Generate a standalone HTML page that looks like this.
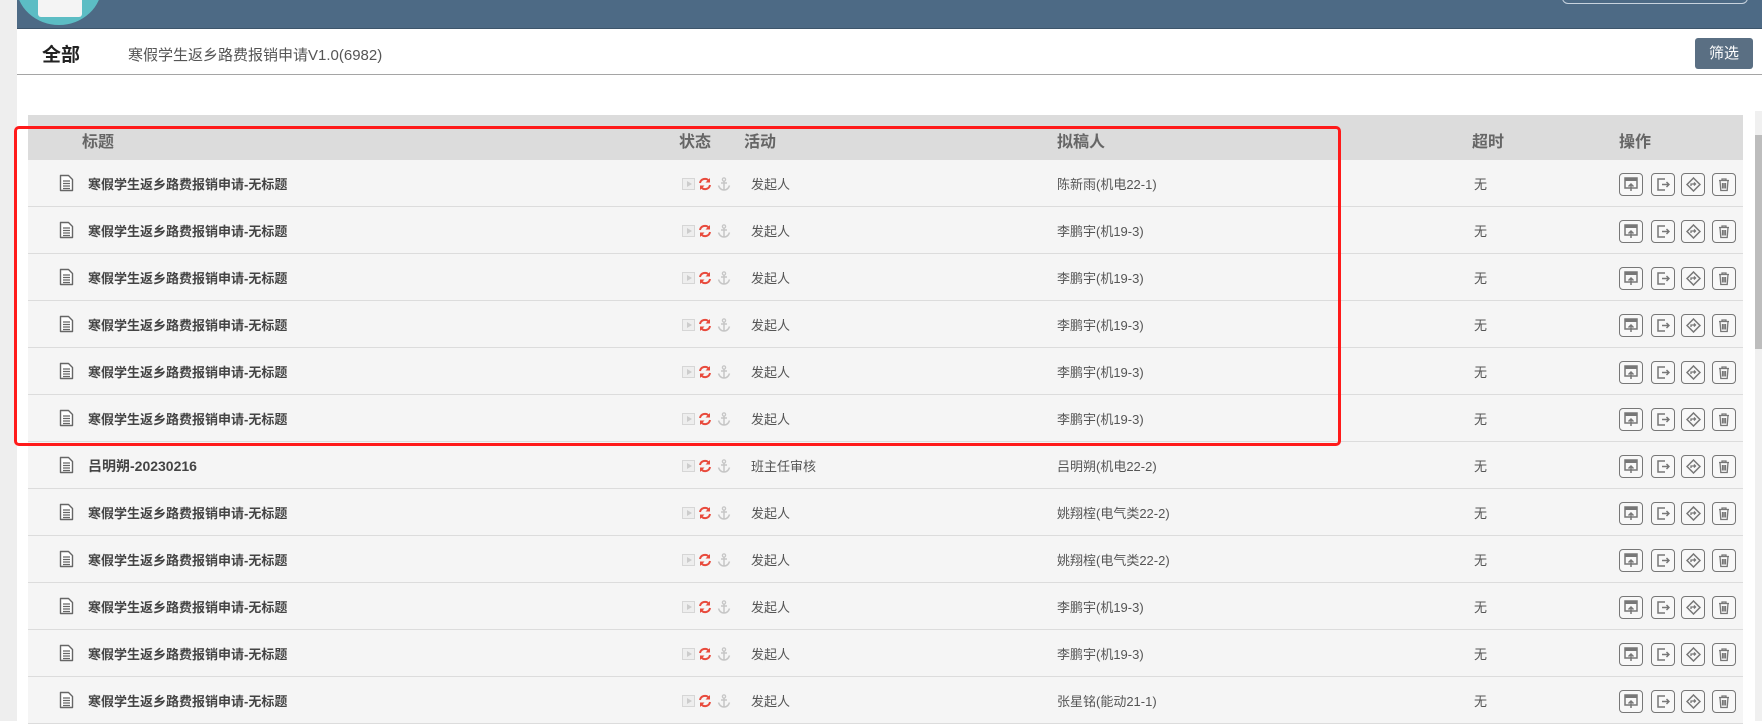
<!DOCTYPE html>
<html><head><meta charset="utf-8"><style>
*{margin:0;padding:0;box-sizing:border-box}
body{width:1762px;height:721px;overflow:hidden;background:#fff;font-family:"Liberation Sans","Noto Sans CJK SC",sans-serif;position:relative;color:#555}
.abs{position:absolute}
.strip{left:0;top:0;width:17px;height:721px;background:#eeeeee}
.hdr{left:17px;top:0;width:1745px;height:29px;background:#4d6a85;border-bottom:1px solid #3d556b}
.logo{left:16px;top:-55px;width:86px;height:80px;border-radius:50%;background:#5cbdc4}
.logo i{position:absolute;left:22px;top:36px;width:44px;height:36px;background:#f4f4f4;border-radius:3px}
.obtn{left:1562px;top:-20px;width:186px;height:24px;border:1px solid #c8d3de;border-radius:6px}
.line{left:17px;top:74px;width:1745px;height:1px;background:#a5a5a5}
.all{left:42px;top:40px;font-size:19px;font-weight:bold;color:#222}
.sub{left:128px;top:44px;font-size:15px;color:#555}
.sx{left:1695px;top:38px;width:58px;height:31px;background:#5a6f83;border-radius:3px;color:#fff;font-size:15px;text-align:center;line-height:31px}
.th{left:28px;top:115px;width:1715px;height:45px;background:#dcdcdc}
.th span{position:absolute;top:13px;font-size:16px;font-weight:bold;color:#666}
.row{position:absolute;left:28px;width:1715px;height:47px;background:#f5f5f5;border-bottom:1px solid #dcdcdc;font-size:13px;color:#555}
.row span{position:absolute;top:14px}
.t{left:60px;font-weight:bold;color:#444}
.doc{position:absolute;left:31px;top:14px}
.st{position:absolute;top:18px;left:654px;width:13px;height:12px;border:1px solid #d6d6d6;background:#eee}
.st:after{content:"";position:absolute;left:4px;top:2px;border-left:5px solid #ccc;border-top:3.5px solid transparent;border-bottom:3.5px solid transparent}
.rf{position:absolute;left:670px;top:17px}
.an{position:absolute;left:689px;top:17px}
.b{position:absolute;top:13px;width:24px;height:23px;border:1.5px solid #777;border-radius:4px;background:#f8f8f8}
.b svg{position:absolute;left:4px;top:3px}
.sb{left:1755px;top:111px;width:7px;height:610px;background:#f0f0f0}
.sb i{position:absolute;left:0;top:24px;width:7px;height:214px;background:#bdbdbd}
.red{left:14px;top:126px;width:1327px;height:320px;border:3.5px solid #ff1a1a;border-radius:5px}
</style></head><body>
<div class="abs strip"></div>
<div class="abs hdr"></div>
<div class="abs logo"><i></i></div>
<div class="abs obtn"></div>
<div class="abs all">全部</div>
<div class="abs sub">寒假学生返乡路费报销申请V1.0(6982)</div>
<div class="abs sx">筛选</div>
<div class="abs line"></div>
<div class="abs th"><span style="left:54px">标题</span><span style="left:651px">状态</span><span style="left:716px">活动</span><span style="left:1029px">拟稿人</span><span style="left:1444px">超时</span><span style="left:1591px">操作</span></div>
<div id="rows"></div>
<div class="abs sb"><i></i></div>
<div class="abs red"></div>
<script>
var d=[["寒假学生返乡路费报销申请-无标题","发起人","陈新雨(机电22-1)"],["寒假学生返乡路费报销申请-无标题","发起人","李鹏宇(机19-3)"],["寒假学生返乡路费报销申请-无标题","发起人","李鹏宇(机19-3)"],["寒假学生返乡路费报销申请-无标题","发起人","李鹏宇(机19-3)"],["寒假学生返乡路费报销申请-无标题","发起人","李鹏宇(机19-3)"],["寒假学生返乡路费报销申请-无标题","发起人","李鹏宇(机19-3)"],["吕明朔-20230216","班主任审核","吕明朔(机电22-2)"],["寒假学生返乡路费报销申请-无标题","发起人","姚翔榁(电气类22-2)"],["寒假学生返乡路费报销申请-无标题","发起人","姚翔榁(电气类22-2)"],["寒假学生返乡路费报销申请-无标题","发起人","李鹏宇(机19-3)"],["寒假学生返乡路费报销申请-无标题","发起人","李鹏宇(机19-3)"],["寒假学生返乡路费报销申请-无标题","发起人","张星铭(能动21-1)"]];
var ic=['<svg width="14" height="15" viewBox="0 0 14 15"><rect x="1" y="1" width="12" height="10" fill="none" stroke="#777" stroke-width="1.5"/><rect x="1" y="1" width="12" height="3" fill="#777"/><path d="M7 14V7M4.5 9.5L7 7l2.5 2.5" stroke="#777" fill="none" stroke-width="1.5"/></svg>','<svg width="14" height="15" viewBox="0 0 14 15"><path d="M9 2H2v11h7" stroke="#777" fill="none" stroke-width="1.5"/><path d="M6 7.5h7M10.5 5l2.5 2.5-2.5 2.5" stroke="#777" fill="none" stroke-width="1.5"/></svg>','<svg width="15" height="15" viewBox="0 0 15 15"><path d="M7.5 1l6.5 6.5-6.5 6.5L1 7.5z" stroke="#777" fill="none" stroke-width="1.5"/><path d="M5 9V7h4.5M8 5.5l1.5 1.5L8 8.5" stroke="#777" fill="none" stroke-width="1.3"/></svg>','<svg width="14" height="15" viewBox="0 0 14 15"><path d="M2 3.5h10M5 3.5V2h4v1.5M3 3.5l.8 10h6.4l.8-10M5.5 6v5.5M7 6v5.5M8.5 6v5.5" stroke="#777" fill="none" stroke-width="1.3"/></svg>'];
var doc='<svg class="doc" width="15" height="18" viewBox="0 0 15 18"><path d="M1.5 1.5h8l4 4v11h-12z" fill="#fff" stroke="#666" stroke-width="1.4" stroke-linejoin="round"/><path d="M4 7h7M4 9.5h7M4 12h7M4 14.5h7" stroke="#666" stroke-width="1.2"/></svg>';
var rf='<svg class="rf" width="14" height="14" viewBox="0 0 14 14"><path d="M2 6A5 5 0 0 1 11 4M12 8A5 5 0 0 1 3 10" stroke="#e84a3c" stroke-width="2" fill="none"/><path d="M12 1v4.5H7.5zM2 13V8.5h4.5z" fill="#e84a3c"/></svg>';
var an='<svg class="an" width="14" height="14" viewBox="0 0 14 14"><circle cx="7" cy="2.5" r="1.6" fill="none" stroke="#c6c6c6" stroke-width="1.3"/><path d="M7 4v9M4 6h6M1.5 8.5Q3 13 7 13Q11 13 12.5 8.5" stroke="#c6c6c6" stroke-width="1.5" fill="none"/></svg>';
var h='';d.forEach(function(r,i){var top=160+i*47;h+='<div class="row" style="top:'+top+'px">'+doc+'<span class="t"'+(i==6?' style="font-size:14px"':'')+'>'+r[0]+'</span><div class="st"></div>'+rf+an+'<span style="left:723px">'+r[1]+'</span><span style="left:1029px">'+r[2]+'</span><span style="left:1446px">无</span>';[1591,1623,1653,1684].forEach(function(x,k){h+='<div class="b" style="left:'+x+'px">'+ic[k]+'</div>'});h+='</div>'});
document.getElementById('rows').innerHTML=h;
</script>
</body></html>
